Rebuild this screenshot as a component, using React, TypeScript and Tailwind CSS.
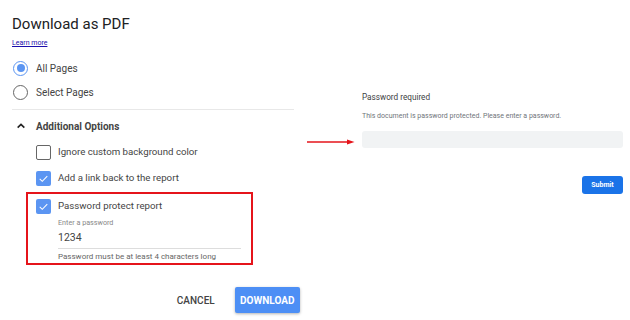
import React, { useState } from "react";

const Check = () => (
  <svg viewBox="0 0 16 16" className="w-[11px] h-[11px]">
    <path d="M2.5 8.5 L6.2 12 L13.5 4.5" fill="none" stroke="white" strokeWidth="1.5" />
  </svg>
);

const Checkbox: React.FC<{ checked: boolean; onClick: () => void }> = ({ checked, onClick }) => (
  <button
    onClick={onClick}
    className={`w-[15px] h-[15px] shrink-0 rounded-[2px] flex items-center justify-center ${
      checked ? "bg-[#5b95f2]" : "border-[1.5px] border-[#666] bg-white"
    }`}
  >
    {checked && <Check />}
  </button>
);

const App: React.FC = () => {
  const [pages, setPages] = useState<"all" | "select">("all");
  const [ignoreBg, setIgnoreBg] = useState(false);
  const [addLink, setAddLink] = useState(true);
  const [protect, setProtect] = useState(true);
  const [pass, setPass] = useState("1234");

  return (
    <div className="w-[630px] h-[320px] bg-white flex font-['Roboto',sans-serif] overflow-hidden">
      {/* Dialog kiri */}
      <div className="w-[300px] shrink-0 pl-3 pt-[14px]">
        <h1 className="text-[15px] leading-[20px] text-[#202124]">Download as PDF</h1>
        <a href="#" className="block mt-[4px] text-[7px] leading-[10px] text-[#1a0dab] underline w-fit">
          Learn more
        </a>

        <div className="mt-[8px]">
          {[
            { key: "all", label: "All Pages" },
            { key: "select", label: "Select Pages" },
          ].map((r) => (
            <div
              key={r.key}
              className="h-6 flex items-center cursor-pointer"
              onClick={() => setPages(r.key as any)}
            >
              <div className="w-[24px] pl-[1px]">
                <span
                  className={`w-[15px] h-[15px] rounded-full flex items-center justify-center border-[1.5px] ${
                    pages === r.key ? "border-[#5b95f2]" : "border-[#666]"
                  }`}
                >
                  {pages === r.key && <span className="w-[8px] h-[8px] rounded-full bg-[#5b95f2]" />}
                </span>
              </div>
              <span className="text-[10px] text-[#444]">{r.label}</span>
            </div>
          ))}
        </div>

        <div className="mt-[5px] h-px w-[282px] bg-[#e8e8e8]" />

        {/* Additional Options */}
        <div className="mt-[4px] h-6 flex items-center">
          <div className="w-[24px] pl-[4px]">
            <svg viewBox="0 0 12 12" className="w-[10px] h-[10px]">
              <path d="M2 8 L6 4 L10 8" fill="none" stroke="#222" strokeWidth="2" />
            </svg>
          </div>
          <span className="text-[10px] font-bold text-[#444]">Additional Options</span>
        </div>

        <div className="mt-[1px] pl-[24px]">
          <div className="h-[26px] flex items-center gap-[7px]">
            <Checkbox checked={ignoreBg} onClick={() => setIgnoreBg(!ignoreBg)} />
            <span className="text-[9.7px] text-[#444]">Ignore custom background color</span>
          </div>
          <div className="h-[26px] flex items-center gap-[7px]">
            <Checkbox checked={addLink} onClick={() => setAddLink(!addLink)} />
            <span className="text-[9.7px] text-[#444]">Add a link back to the report</span>
          </div>
        </div>

        {/* Kotak merah password */}
        <div className="ml-[14px] mt-[1px] w-[227px] border-2 border-[#e5141b] pl-[8px] pb-[1px]">
          <div className="h-6 flex items-center gap-[7px]">
            <Checkbox checked={protect} onClick={() => setProtect(!protect)} />
            <span className="text-[9.7px] text-[#444]">Password protect report</span>
          </div>
          <div className="pl-[22px]">
            <div className="text-[7.2px] leading-[10px] text-[#888]">Enter a password</div>
            <input
              value={pass}
              onChange={(e) => setPass(e.target.value)}
              className="mt-[2px] block w-[183px] h-[16px] text-[10.5px] text-[#444] outline-none border-b border-[#ddd] leading-[16px] box-content pb-[2px]"
            />
            <div className="mt-[3px] text-[8px] leading-[10px] text-[#666]">
              Password must be at least 4 characters long
            </div>
          </div>
        </div>

        {/* Tombol */}
        <div className="mt-[22px] ml-[155px] flex items-center">
          <button className="w-[58px] h-[26px] text-[10px] font-medium text-[#444]">CANCEL</button>
          <button className="ml-[10px] w-[66px] h-[26px] rounded-[2px] bg-[#4d8ff5] text-white text-[10px] font-bold shadow-[0_1px_3px_rgba(0,0,0,0.3)]">
            DOWNLOAD
          </button>
        </div>
      </div>

      {/* Panel kanan */}
      <div className="flex-1 pt-[91px] pr-[7px]">
        <div className="pl-[62px] text-[8.2px] leading-[12px] text-[#3c4043]">Password required</div>
        <div className="pl-[62px] mt-[8px] text-[7px] leading-[10px] text-[#70757a]">
          This document is password protected. Please enter a password.
        </div>
        <div className="mt-[10px] flex items-center pl-[7px]">
          <svg viewBox="0 0 48 6" className="w-[48px] h-[6px] shrink-0 mt-[5px]">
            <path d="M0 3 H42" stroke="#e5141b" strokeWidth="1.3" />
            <path d="M40 0.5 L47.5 3 L40 5.5 Z" fill="#e5141b" />
          </svg>
          <div className="ml-[7px] flex-1 h-[17px] rounded-[3px] bg-[#f1f3f4]" />
        </div>
        <div className="mt-[28px] flex justify-end">
          <button className="w-[41px] h-[18px] rounded-[3px] bg-[#1a73e8] text-white text-[7px] font-bold">
            Submit
          </button>
        </div>
      </div>
    </div>
  );
};

export default App;
